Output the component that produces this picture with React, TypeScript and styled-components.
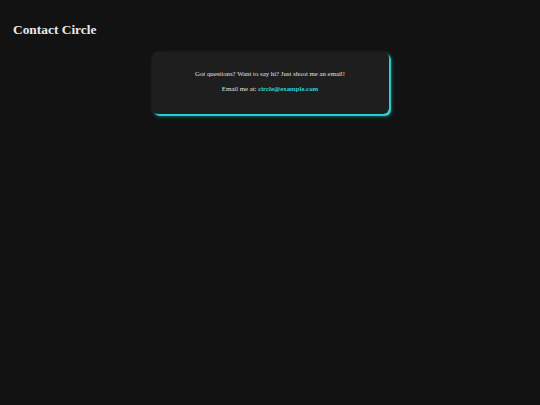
import React from 'react';
import styled, { createGlobalStyle } from 'styled-components';

const GlobalStyle = createGlobalStyle`
  html, body {
    margin: 0;
    padding: 0;
    background-color: #121212;
    color: #e0e0e0;
    font-family: "Liberation Serif", "Times New Roman", serif;
  }
`;

const Page = styled.div`
  min-height: 405px;
  padding: 21px 13px;
  box-sizing: border-box;
`;

const Title = styled.h1`
  margin: 0;
  font-size: 13.4px;
  font-weight: 700;
  line-height: 18px;
  color: #e8e8e8;
`;

const Card = styled.section`
  width: 237px;
  height: 62px;
  margin: 13px auto 0;
  box-sizing: border-box;
  padding: 18px 10px 0;
  background-color: #1e1e1e;
  border-radius: 6px;
  box-shadow: 2px 2px 1px #2ad4d4, 2px 2px 4px rgba(42, 212, 212, 0.5);
  text-align: center;
  display: flex;
  flex-direction: column;
  gap: 7px;
`;

const Line = styled.p`
  margin: 0;
  font-size: 6.8px;
  line-height: 8px;
  color: #e0e0e0;
`;

const EmailLink = styled.a`
  color: #2ad4d4;
  font-weight: 700;
  text-decoration: none;
`;

export default function App() {
  return (
    <>
      <GlobalStyle />
      <Page>
        <Title>Contact Circle</Title>
        <Card>
          <Line>Got questions? Want to say hi? Just shoot me an email!</Line>
          <Line>
            Email me at: <EmailLink href="mailto:circle@example.com">circle@example.com</EmailLink>
          </Line>
        </Card>
      </Page>
    </>
  );
}
